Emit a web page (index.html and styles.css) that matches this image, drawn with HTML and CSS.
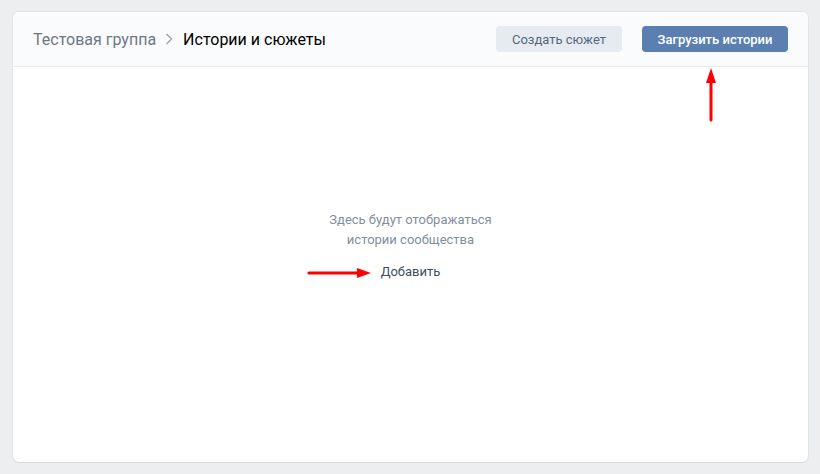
FILE: index.html
```html
<!DOCTYPE html>
<html lang="ru">
<head>
    <meta charset="UTF-8">
    <title>Истории и сюжеты</title>
    <link rel="stylesheet" href="styles.css">
</head>
<body>
    <div class="card">
        <div class="header">
            <div class="breadcrumbs">
                <span class="crumb">Тестовая группа</span>
                <svg class="chevron" width="8" height="12" viewBox="0 0 8 12">
                    <path d="M1.5 1 L6.5 6 L1.5 11" fill="none" stroke="#99a2ad" stroke-width="1.4"/>
                </svg>
                <span class="crumb current">Истории и сюжеты</span>
            </div>
            <div class="actions">
                <button class="btn btn-secondary">Создать сюжет</button>
                <button class="btn btn-primary">Загрузить истории</button>
            </div>
        </div>

        <div class="content">
            <div class="empty-text">Здесь будут отображаться<br>истории сообщества</div>
            <a class="add-link">Добавить</a>
        </div>

        <!-- стрелки-подсказки поверх страницы -->
        <svg class="arrow arrow-right" width="68" height="14" viewBox="0 0 68 14">
            <line x1="2" y1="7" x2="52" y2="7" stroke="#ff0000" stroke-width="3.2" stroke-linecap="round"/>
            <polygon points="50,2 64,7 50,12" fill="#ff0000"/>
        </svg>
        <svg class="arrow arrow-up" width="14" height="56" viewBox="0 0 14 56">
            <line x1="7" y1="14" x2="7" y2="53" stroke="#ff0000" stroke-width="3" stroke-linecap="round"/>
            <polygon points="2,16 7,1 12,16" fill="#ff0000"/>
        </svg>
    </div>
</body>
</html>
```

FILE: styles.css
```css
* {
    margin: 0;
    padding: 0;
    box-sizing: border-box;
}

body {
    font-family: Roboto, "Open Sans", sans-serif;
    background: #edeef0;
    padding: 12px 12px 12px 13px;
}

.card {
    position: relative;
    width: 795px;
    height: 450px;
    background: #fff;
    border-radius: 6px;
    box-shadow: 0 1px 0 0 #d7d8db, 0 0 0 1px #e3e4e8;
    overflow: hidden;
}

.header {
    height: 55px;
    display: flex;
    align-items: center;
    justify-content: space-between;
    padding: 0 20px;
    background: #fafbfc;
    border-bottom: 1px solid #e7e8ec;
}

.breadcrumbs {
    display: flex;
    align-items: center;
    font-size: 16px;
}

.crumb {
    color: #6d7885;
}

.crumb.current {
    color: #000;
}

.chevron {
    margin: 0 10px 0 9px;
}

.actions {
    display: flex;
    gap: 20px;
}

.btn {
    height: 26px;
    padding: 0;
    border: none;
    border-radius: 4px;
    font-family: inherit;
    font-size: 13px;
    white-space: nowrap;
    text-align: center;
    cursor: pointer;
}

.btn-secondary {
    width: 126px;
    background: #e5ebf1;
    color: #55677d;
}

.btn-primary {
    width: 146px;
    background: #5b7fb1;
    color: #fff;
    font-weight: 500;
}

.content {
    display: flex;
    flex-direction: column;
    align-items: center;
    padding-top: 143px;
    text-align: center;
}

.empty-text {
    font-size: 13px;
    line-height: 20px;
    color: #828f9d;
}

.add-link {
    margin-top: 12px;
    font-size: 13px;
    line-height: 20px;
    color: #3c4f66;
    cursor: pointer;
}

.arrow {
    position: absolute;
}

.arrow-right {
    left: 294px;
    top: 254px;
}

.arrow-up {
    left: 691px;
    top: 55px;
}
```
